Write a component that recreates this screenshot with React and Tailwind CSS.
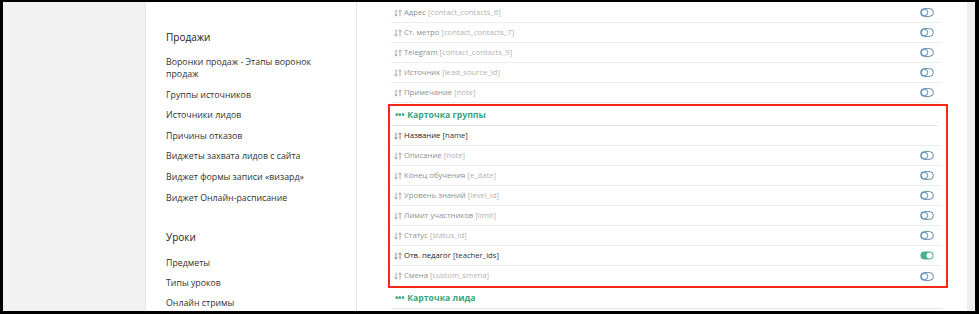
import React from "react";

const SortIcon = ({ dark }) => (
  <svg width="8" height="8" viewBox="0 0 8 8" className="shrink-0">
    <g stroke={dark ? "#8a8a8a" : "#a8a8a8"} strokeWidth="1" fill="none">
      <path d="M2 0.5V7M0.5 5.5L2 7.2L3.5 5.5" />
      <path d="M6 7.5V1M4.5 2.5L6 0.8L7.5 2.5" />
    </g>
  </svg>
);

const Toggle = ({ on }) =>
  on ? (
    <svg width="14" height="9" viewBox="0 0 14 9">
      <rect x="0.5" y="0.5" width="13" height="8" rx="4" fill="#48b08a" />
      <circle cx="9.5" cy="4.5" r="3" fill="#fff" />
    </svg>
  ) : (
    <svg width="14" height="9" viewBox="0 0 14 9">
      <g stroke="#4a80ae" strokeWidth="0.9" fill="none">
        <rect x="0.6" y="0.6" width="12.8" height="7.8" rx="3.9" />
        <circle cx="4.5" cy="4.5" r="3.2" />
      </g>
    </svg>
  );

const Row = ({ label, field, dark, toggle, last }) => (
  <div
    className={`h-[20px] flex items-center pl-[3px] pr-[8px] ${
      last ? "" : "border-b border-[#ececec]"
    }`}
  >
    <SortIcon dark={dark} />
    <span className="ml-[2px] text-[7.7px] leading-none whitespace-nowrap">
      <span className={dark ? "text-[#222]" : "text-[#8f8f8f]"}>{label}</span>{" "}
      <span className={dark ? "text-[#333]" : "text-[#b3b3b3]"}>[{field}]</span>
    </span>
    {toggle && (
      <div className="ml-auto flex items-center">
        <Toggle on={toggle === "on"} />
      </div>
    )}
  </div>
);

const GroupHeader = ({ title, line }) => (
  <div
    className={`h-[20px] flex items-center pl-[4px] text-[8.7px] font-bold text-[#36a67f] leading-none ${
      line ? "border-b border-[#e6e6e6] mr-[4px]" : ""
    }`}
  >
    <span className="tracking-[-0.2px] mr-[3px]">•••</span>
    <span>{title}</span>
  </div>
);

const topRows = [
  { label: "Адрес", field: "contact_contacts_6" },
  { label: "Ст. метро", field: "contact_contacts_7" },
  { label: "Telegram", field: "contact_contacts_9" },
  { label: "Источник", field: "lead_source_id" },
  { label: "Примечание", field: "note" },
];

const groupRows = [
  { label: "Название", field: "name", dark: true },
  { label: "Описание", field: "note", toggle: "off" },
  { label: "Конец обучения", field: "e_date", toggle: "off" },
  { label: "Уровень знаний", field: "level_id", toggle: "off" },
  { label: "Лимит участников", field: "limit", toggle: "off" },
  { label: "Статус", field: "status_id", toggle: "off" },
  { label: "Отв. педагог", field: "teacher_ids", dark: true, toggle: "on" },
  { label: "Смена", field: "custom_smena", toggle: "off" },
];

const sales = [
  "Воронки продаж - Этапы воронок продаж",
  "Группы источников",
  "Источники лидов",
  "Причины отказов",
  "Виджеты захвата лидов с сайта",
  "Виджет формы записи «визард»",
  "Виджет Онлайн-расписание",
];

const lessons = ["Предметы", "Типы уроков", "Онлайн стримы"];

export default function App() {
  return (
    <div
      className="w-[979px] h-[314px] overflow-hidden bg-white border-black border-t-2 border-l-[3px] border-r-4 border-b-[3px] flex"
      style={{ fontFamily: '"Open Sans", "Noto Sans", sans-serif' }}
    >
      <div className="w-[143px] shrink-0 bg-[#f2f2f2] border-r border-[#e6e6e6]" />

      <div className="w-[211px] shrink-0 border-r border-[#e6e6e6] pl-[20px] pt-[28px] text-[#333]">
        <div className="text-[10px] leading-[14px] text-[#222]">Продажи</div>
        <div className="mt-[12px] flex flex-col gap-[8.6px] text-[8.8px] leading-[12px] pr-[22px]">
          {sales.map((s) => (
            <div key={s}>{s}</div>
          ))}
        </div>
        <div className="mt-[26px] text-[10px] leading-[14px] text-[#222]">Уроки</div>
        <div className="mt-[13px] flex flex-col gap-[8.3px] text-[8.8px] leading-[12px]">
          {lessons.map((s) => (
            <div key={s}>{s}</div>
          ))}
        </div>
      </div>

      <div className="flex-1 pl-[34px] pt-[1px]">
        <div className="w-[551px]">
          {topRows.map((r) => (
            <Row key={r.field} {...r} toggle="off" />
          ))}
        </div>
        <div className="mt-[1px] -ml-[3px] w-[560px] border-2 border-[#f5281a] pl-[1px] pr-[4px]">
          <GroupHeader title="Карточка группы" line />
          {groupRows.map((r, i) => (
            <Row key={r.field} {...r} last={i === groupRows.length - 1} />
          ))}
        </div>
        <div className="w-[551px] border-b border-[#e6e6e6]">
          <GroupHeader title="Карточка лида" />
        </div>
      </div>

      <div className="w-[8px] shrink-0 bg-[#efefef]" />
    </div>
  );
}
